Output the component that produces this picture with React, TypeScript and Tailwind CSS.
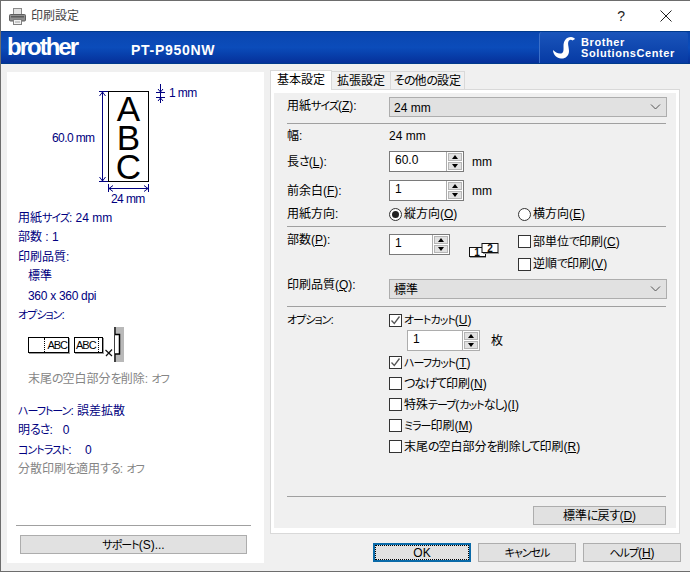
import type { ReactNode } from "react";

const jp = "font-['Liberation_Sans','Noto_Sans_CJK_JP',sans-serif] [font-feature-settings:'palt']";

function Mn({ children }: { children: ReactNode }) {
  return <span className="underline underline-offset-1">{children}</span>;
}

// katakana and hiragana run narrower in the dialog's font
function K({ children }: { children: ReactNode }) {
  return <span className="text-[11px] tracking-[-1px]">{children}</span>;
}

function H({ children }: { children: ReactNode }) {
  return <span className="tracking-[-1px]">{children}</span>;
}

function PrinterIcon() {
  return (
    <svg width="17" height="17" viewBox="0 0 17 17" className="shrink-0">
      <rect x="4.5" y="0.5" width="8" height="6" fill="#e4e4e4" stroke="#8a8a8a" />
      <rect x="0.5" y="6.5" width="16" height="6.5" rx="1" fill="#8f8f8f" stroke="#5f5f5f" />
      <rect x="2" y="8" width="13" height="1.5" fill="#5a5a5a" />
      <rect x="4.5" y="11.5" width="8" height="5" fill="#f2f2f2" stroke="#808080" />
      <rect x="6" y="13.5" width="5" height="1" fill="#a0a0a0" />
    </svg>
  );
}

function Combo({ value }: { value: string }) {
  return (
    <div className="flex h-[20px] w-[278px] items-center justify-between border border-[#adadad] bg-[#e1e1e1] pl-[4px] pr-[5px]">
      <span className="pt-[1px]">{value}</span>
      <svg width="11" height="6" viewBox="0 0 11 6">
        <path d="M1 0.5 L5.5 5 L10 0.5" fill="none" stroke="#555" />
      </svg>
    </div>
  );
}

function Spinner({ value, width, active }: { value: string; width: string; active?: boolean }) {
  return (
    <div className={`flex h-[21px] ${width} border ${active ? "border-[#7a7a7a]" : "border-[#adadad]"} bg-white`}>
      <span className="flex-1 pl-[5px] leading-[17px]">{value}</span>
      <div className="flex w-[17px] flex-col gap-px border-l border-[#adadad] bg-white px-px py-px">
        <div className="flex flex-1 items-center justify-center border border-[#b5b5b5] bg-[#e1e1e1]">
          <div className="h-0 w-0 border-x-[3px] border-b-[4px] border-x-transparent border-b-black" />
        </div>
        <div className="flex flex-1 items-center justify-center border border-[#b5b5b5] bg-[#e1e1e1]">
          <div className="h-0 w-0 border-x-[3px] border-t-[4px] border-x-transparent border-t-black" />
        </div>
      </div>
    </div>
  );
}

function Check({ checked }: { checked?: boolean }) {
  return (
    <span className="flex h-[13px] w-[13px] shrink-0 items-center justify-center border border-[#333] bg-white">
      {checked && (
        <svg width="11" height="11" viewBox="0 0 11 11">
          <path d="M1.5 5.5 L4.3 8.5 L9.5 1.5" fill="none" stroke="#555" strokeWidth="1.3" />
        </svg>
      )}
    </span>
  );
}

function CheckRow({ label, checked, height }: { label: ReactNode; checked?: boolean; height?: string }) {
  return (
    <div className={`flex ${height ?? "h-[21px]"} items-center gap-[2px]`}>
      <Check checked={checked} />
      <span>{label}</span>
    </div>
  );
}

function Radio({ label, checked }: { label: ReactNode; checked?: boolean }) {
  return (
    <div className="flex items-center gap-[2px]">
      <span className="flex h-[13px] w-[13px] items-center justify-center rounded-full border border-[#333] bg-white">
        {checked && <span className="h-[7px] w-[7px] rounded-full bg-[#222]" />}
      </span>
      <span>{label}</span>
    </div>
  );
}

function Btn({ children, className, focus }: { children: ReactNode; className?: string; focus?: boolean }) {
  return (
    <div
      className={`flex items-center justify-center bg-[#e1e1e1] ${
        focus ? "border-2 border-[#0a6aa8]" : "border border-[#adadad]"
      } ${className ?? ""}`}
    >
      {focus ? (
        <span className="flex h-full w-full items-center justify-center border border-dotted border-black">{children}</span>
      ) : (
        children
      )}
    </div>
  );
}

function Sep() {
  return <div className="h-px w-[379px] bg-[#a0a0a0]" />;
}

function PreviewDiagram() {
  return (
    <div className="relative h-[126px] w-full text-[#000080]">
      <svg width="257" height="132" viewBox="0 0 257 132" className="absolute left-0 top-0">
        <g stroke="#000080" fill="none">
          <path d="M92 19.5H101M95.5 20V109M92 109.5H101" />
          <path d="M92.5 24L95.5 20L98.5 24M92.5 105L95.5 109L98.5 105" />
          <path d="M101.5 112V120M141.5 112V120M102 116.5H141" />
          <path d="M106 113.5L102 116.5L106 119.5M137 113.5L141 116.5L137 119.5" />
          <path d="M149 20.5H158M149 25.5H158M153.5 12V31" />
          <path d="M151 17L153.5 20L156 17M151 29L153.5 26L156 29" />
        </g>
      </svg>
      <div className="absolute left-[101px] top-[19px] flex h-[91px] w-[41px] flex-col items-center border border-black bg-white pt-[2px] font-['Liberation_Sans',sans-serif] text-[35px] leading-[29px] text-black">
        <span>A</span>
        <span>B</span>
        <span>C</span>
      </div>
      <span className="absolute left-[45px] top-[58px] tracking-[-0.6px]">60.0 mm</span>
      <span className="absolute left-[162px] top-[13px] tracking-[-0.6px]">1 mm</span>
      <span className="absolute left-[104px] top-[119px] tracking-[-0.6px]">24 mm</span>
    </div>
  );
}

function TapeIcons() {
  return (
    <div className="ml-[21px] mt-[2px] flex h-[35px] items-start font-['Liberation_Sans',sans-serif] text-black">
      <div className="mt-[10px] flex h-[16px] w-[41px] items-center justify-end border border-black bg-white pr-[1px] text-[11px] tracking-[-1px] shadow-[1px_1px_0_#999]">
        <span className="border-l border-dotted border-black pl-[2px] leading-[14px]">ABC</span>
      </div>
      <div className="ml-[5px] mt-[10px] flex h-[16px] w-[29px] items-center border border-black bg-white pl-[1px] text-[11px] tracking-[-1px] shadow-[1px_1px_0_#999]">
        <span className="border-r border-dotted border-black pr-[2px] leading-[14px]">ABC</span>
      </div>
      <svg width="8" height="8" viewBox="0 0 8 8" className="ml-[2px] mt-[22px] shrink-0">
        <path d="M0.5 1L7 7M7 0.5L1 7" stroke="#111" strokeWidth="1.2" fill="none" />
      </svg>
      <svg width="10" height="35" viewBox="0 0 10 35" className="ml-[1px] shrink-0">
        <rect x="2" width="8" height="35" fill="#b9b9b9" />
        <path d="M1 0V35" stroke="#000" strokeWidth="1.5" />
        <path d="M1 7.5H5.5V27H1" fill="#fff" stroke="#000" strokeWidth="1.5" />
      </svg>
    </div>
  );
}

function LeftPanel() {
  const row = "flex h-[19.5px] items-center whitespace-pre";
  return (
    <div className="ml-[6px] mt-[8px] flex h-[491px] w-[257px] flex-col bg-white text-[#000080]">
      <PreviewDiagram />
      <div className="mt-[10px] flex flex-col pl-[11px]">
        <div className={row}>用紙<K>サイズ</K>: 24 mm</div>
        <div className={row}>部数 : 1</div>
        <div className={row}>印刷品質:</div>
        <div className={`${row} pl-[10px]`}>標準</div>
        <div className={`${row} pl-[10px] tracking-[-0.3px]`}>360 x 360 dpi</div>
        <div className={row}><K>オプション</K>:</div>
      </div>
      <TapeIcons />
      <div className="ml-[21px] mt-[8px] h-[19px] leading-[18px] text-[#858585]">
        末尾<H>の</H>空白部分<H>を</H>削除: <K>オフ</K>
      </div>
      <div className="mt-[12px] flex flex-col pl-[11px]">
        <div className={row}><K>ハーフトーン</K>: 誤差拡散</div>
        <div className={row}>明<H>るさ</H>:   0</div>
        <div className={row}><K>コントラスト</K>:    0</div>
        <div className={`${row} text-[#858585]`}>
          分散印刷<H>を</H>適用<H>する</H>: <K>オフ</K>
        </div>
      </div>
      <div className="mx-[9px] mt-auto h-px w-[235px] bg-[#a0a0a0]" />
      <Btn className="mx-[13px] mb-[9px] mt-[9px] h-[19px] w-[227px] text-black"><span><K>サポート</K>(S)...</span></Btn>
    </div>
  );
}

function Tabs() {
  return (
    <div className="flex h-[19px] items-end">
      <div className="z-10 -mb-px flex h-[20px] w-[62px] items-center justify-center border border-b-0 border-[#d9d9d9] bg-white pb-[1px]">基本設定</div>
      <div className="flex h-[18px] w-[59px] items-center justify-center border border-l-0 border-b-0 border-[#d9d9d9] bg-[#f0f0f0] pt-[1px]">拡張設定</div>
      <div className="flex h-[18px] w-[74px] items-center justify-center border border-l-0 border-b-0 border-[#d9d9d9] bg-[#f0f0f0] pt-[1px]"><span><H>その</H>他<H>の</H>設定</span></div>
    </div>
  );
}

function BasicTab() {
  const row = "flex items-center";
  const label = "w-[102px] shrink-0";
  return (
    <div className="h-[445px] w-[410px] border border-[#d9d9d9] bg-white p-[3px] pb-[5px]">
      <div className="flex h-full flex-col bg-[#f0f0f0] pl-[13px] pt-[4px] text-black">
        <div className={`${row} h-[20px]`}>
          <span className={`${label} mt-[1px] self-start`}>
            用紙<K>サイズ</K>(<Mn>Z</Mn>):
          </span>
          <Combo value="24 mm" />
        </div>
        <div className="mt-[6px]"><Sep /></div>
        <div className={`${row} mt-[3px] h-[18px]`}>
          <span className={label}>幅:</span>
          <span>24 mm</span>
        </div>
        <div className={`${row} mt-[6px]`}>
          <span className={label}>
            長<H>さ</H>(<Mn>L</Mn>):
          </span>
          <Spinner value="60.0" width="w-[75px]" active />
          <span className="ml-[8px]">mm</span>
        </div>
        <div className={`${row} mt-[8px]`}>
          <span className={label}>
            前余白(<Mn>F</Mn>):
          </span>
          <Spinner value="1" width="w-[75px]" active />
          <span className="ml-[8px]">mm</span>
        </div>
        <div className={`${row} mt-[4px] h-[18px]`}>
          <span className={label}>用紙方向:</span>
          <div className="w-[129px]">
            <Radio checked label={<>縦方向(<Mn>O</Mn>)</>} />
          </div>
          <Radio label={<>横方向(<Mn>E</Mn>)</>} />
        </div>
        <div className="mt-[3px]"><Sep /></div>
        <div className="mt-[7px] flex h-[39px] items-start">
          <span className={`${label} leading-[12px]`}>
            部数(<Mn>P</Mn>):
          </span>
          <Spinner value="1" width="w-[61px]" active />
          <svg width="30" height="16" viewBox="0 0 30 16" className="ml-[19px] mt-[9px] shrink-0">
            <rect x="0.5" y="4.5" width="16" height="9" fill="#fff" stroke="#111" />
            <rect x="13" y="0.5" width="16" height="9" fill="#fff" stroke="#111" />
            <path d="M1 14.5H17M14 10.5H30" stroke="#999" />
            <text x="8" y="13" fontSize="10" fontWeight="700" textAnchor="middle" fill="#111" fontFamily="Liberation Sans">1</text>
            <text x="21" y="8.5" fontSize="10" fontWeight="700" textAnchor="middle" fill="#111" fontFamily="Liberation Sans">2</text>
          </svg>
          <div className="ml-[19px] mt-[-3px] flex flex-col">
            <CheckRow label={<>部単位<H>で</H>印刷(<Mn>C</Mn>)</>} />
            <CheckRow height="h-[24px]" label={<>逆順<H>で</H>印刷(<Mn>V</Mn>)</>} />
          </div>
        </div>
        <div className={`${row} mt-[6px] h-[20px]`}>
          <span className={`${label} mt-[-2px] self-start`}>
            印刷品質(<Mn>Q</Mn>):
          </span>
          <Combo value="標準" />
        </div>
        <div className="mt-[7px]"><Sep /></div>
        <div className="mt-[3px] flex">
          <span className={`${label} pt-[2px]`}><K>オプション</K>:</span>
          <div className="flex flex-col">
            <CheckRow checked height="h-[20px]" label={<><K>オートカット</K>(<Mn>U</Mn>)</>} />
            <div className="ml-[18px] flex items-center">
              <Spinner value="1" width="w-[73px]" />
              <span className="ml-[11px]">枚</span>
            </div>
            <div className="mt-[1px]">
              <CheckRow checked label={<><K>ハーフカット</K>(<Mn>T</Mn>)</>} />
            </div>
            <CheckRow label={<><H>つなげて</H>印刷(<Mn>N</Mn>)</>} />
            <CheckRow label={<>特殊<K>テープ</K>(<K>カット</K><H>なし</H>)(<Mn>I</Mn>)</>} />
            <CheckRow label={<><K>ミラー</K>印刷(<Mn>M</Mn>)</>} />
            <CheckRow label={<>末尾<H>の</H>空白部分<H>を</H>削除<H>して</H>印刷(<Mn>R</Mn>)</>} />
          </div>
        </div>
        <div className="mt-auto"><Sep /></div>
        <div className="mb-[3px] mt-[9px] flex w-[379px] justify-end">
          <Btn className="h-[19px] w-[133px]">
            <span>標準<H>に</H>戻<H>す</H>(<Mn>D</Mn>)</span>
          </Btn>
        </div>
      </div>
    </div>
  );
}

export default function App() {
  return (
    <div className={`flex h-[572px] w-[690px] flex-col overflow-hidden border border-r-0 border-[#6d6d6d] bg-[#f0f0f0] text-[12px] leading-[16px] text-black ${jp}`}>
      <div className="flex h-[30px] shrink-0 items-center bg-white pl-[8px]">
        <PrinterIcon />
        <span className="ml-[5px] text-[#444]">印刷設定</span>
        <span className="ml-auto text-[14px] text-[#222]">?</span>
        <svg width="12" height="12" viewBox="0 0 12 12" className="ml-[35px] mr-[18px]">
          <path d="M0.5 0.5L11.5 11.5M11.5 0.5L0.5 11.5" stroke="#222" />
        </svg>
      </div>
      <div className="flex h-[33px] shrink-0 items-center justify-between border-y border-[#003a8c] bg-gradient-to-b from-[#0a46b0] via-[#0b4cba] to-[#06309a] font-['Liberation_Sans',sans-serif] text-white">
        <span className="mb-[2px] ml-[6px] text-[24px] font-bold leading-[28px] tracking-[-2px]">brother</span>
        <span className="ml-[54px] mr-auto mt-[4px] text-[14px] font-bold tracking-[0.7px]">PT-P950NW</span>
        <div className="mr-[2px] flex h-[31px] w-[149px] items-center rounded-t-[3px] border-l border-[#3b6fc9] bg-gradient-to-b from-[#1a55bb] to-[#073aa4] pl-[12px]">
          <svg width="24" height="26" viewBox="0 0 24 26" className="shrink-0">
            <path d="M1 15C3 17 6 19 9 18.5C12 18 11.5 14 11.5 11C11.5 6 14 2 19 2C21 2 22.5 3 23 4L20.5 5.5C19.5 4.5 18 4.5 17 5.5C15 8 17 12 17 16C17 21 13 24 9 23.5C5 23 1 20 1 15Z" fill="#fff" />
          </svg>
          <div className="ml-[5px] text-[11px] font-bold leading-[11px] tracking-[0.6px]">
            <div>Brother</div>
            <div>SolutionsCenter</div>
          </div>
        </div>
      </div>
      <div className="flex flex-1">
        <LeftPanel />
        <div className="ml-[6px] mt-[6px] flex flex-col">
          <Tabs />
          <BasicTab />
          <div className="mt-[9px] flex gap-[7px] pl-[103px]">
            <Btn focus className="h-[19px] w-[98px]">OK</Btn>
            <Btn className="h-[19px] w-[98px]"><K>キャンセル</K></Btn>
            <Btn className="h-[19px] w-[98px]">
              <span><K>ヘルプ</K>(<Mn>H</Mn>)</span>
            </Btn>
          </div>
        </div>
      </div>
    </div>
  );
}
